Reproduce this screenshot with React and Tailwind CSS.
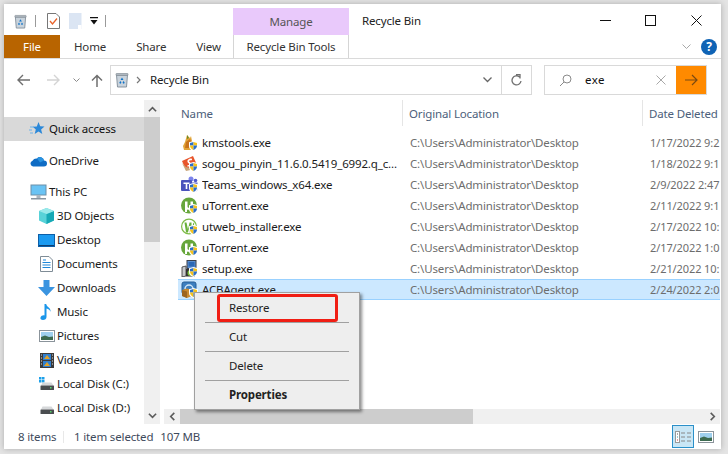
import React from "react";

const Bin = ({ s = 16 }) => (
  <svg width={s} height={s} viewBox="0 0 16 16">
    <path d="M2.5 3h11l-1 12h-9z" fill="#c9d3dc" stroke="#7f8b96" strokeWidth=".9" />
    <rect x="2" y="1.5" width="12" height="2" rx=".5" fill="#aeb7bf" stroke="#7c868f" strokeWidth=".6" />
    <path d="M8 5.500l1.500 2.400h-3zM5.200 11l1.200-2 1 1.600-.7 1.200zM10.800 11l-1.200-2-1 1.600.7 1.200z" fill="#0f73c9" />
  </svg>
);

const Shield = () => (
  <svg className="absolute left-[8px] top-[7px]" width="9" height="10" viewBox="0 0 9 10">
    <path d="M4.5 0L9 1.200V5c0 2.600-2 4.200-4.500 5C2 9.200 0 7.600 0 5V1.200z" fill="#fff" />
    <path d="M4.5 1L1 2v2.600h3.500z" fill="#2a6fc9" />
    <path d="M4.5 1L8 2v2.600H4.500z" fill="#f5c21b" />
    <path d="M1 4.600h3.500V9C2.600 8.300 1 7 1 4.600z" fill="#f5c21b" />
    <path d="M8 4.600H4.500V9C6.400 8.300 8 7 8 4.600z" fill="#2a6fc9" />
  </svg>
);

const FileIcon = ({ kind }) => (
  <span className="relative block w-[17px] h-[17px] shrink-0">
    {kind === "kms" && (
      <svg width="17" height="17" viewBox="0 0 17 17">
        <path d="M6 1l3 3 1-2 1 5 3 4-3 5H3l-1-4 2-4z" fill="#e2a63a" />
        <path d="M5 8l4-3 2 4-3 5H4z" fill="#c9741c" />
        <path d="M6 1l2 3-2 1z" fill="#6b8a2b" />
      </svg>
    )}
    {kind === "sogou" && (
      <svg width="17" height="17" viewBox="0 0 17 17">
        <path d="M1 6L12 1l4 9-11 5z" fill="#e8552b" />
        <path d="M1 8l4 8 9-2-9-2z" fill="#caa57a" />
        <path d="M11 4.500C8 4 6 6 8 7.500s2 3-1.500 3.500" fill="none" stroke="#fff" strokeWidth="1.600" />
      </svg>
    )}
    {kind === "teams" && (
      <svg width="17" height="17" viewBox="0 0 17 17">
        <circle cx="10" cy="3" r="2.500" fill="#7b83eb" />
        <circle cx="14.500" cy="4.500" r="1.800" fill="#5059c9" />
        <path d="M9 6.500h7.500V12a3 3 0 0 1-6 1.500L9 13z" fill="#5059c9" />
        <rect x="0" y="4" width="11" height="11" rx="1" fill="#4b53bc" />
        <path d="M2.500 6.500h6v1.400H6.300v5H4.700v-5H2.500z" fill="#fff" />
      </svg>
    )}
    {kind === "ut" && (
      <svg width="17" height="17" viewBox="0 0 17 17">
        <circle cx="8" cy="8.500" r="8" fill="#66a63b" />
        <path d="M4 4.500h2.500v5c0 1.800 2.500 1.800 3 0v-5H12v10H9.500v-2.500c-1.200 1-2.500 1-3.500.5V15H4z" fill="#fff" />
      </svg>
    )}
    {kind === "utweb" && (
      <svg width="17" height="17" viewBox="0 0 17 17">
        <circle cx="8" cy="8.500" r="7.400" fill="#fff" stroke="#7dbb45" strokeWidth="1.200" />
        <path d="M3.500 4.500h2l1.500 7 1.500-7h2v7l2-7 .8 1-2.300 9H8.500L7.800 11 7 14.500H5z" fill="#6ab03a" />
      </svg>
    )}
    {kind === "setup" && (
      <svg width="17" height="17" viewBox="0 0 17 17">
        <rect x="6" y="0.500" width="9" height="8" fill="#5a8fd0" stroke="#3a3f4a" />
        <rect x="7.500" y="2" width="6" height="4.500" fill="#2c68b5" />
        <path d="M1 7l4-1v10l-4 1z" fill="#c7c9cc" stroke="#333" strokeWidth=".8" />
        <rect x="5" y="9" width="9" height="7.500" fill="#333" />
        <circle cx="9.500" cy="13" r="3" fill="#7ec13d" />
        <circle cx="9.500" cy="13" r="1" fill="#fff" />
      </svg>
    )}
    {kind === "acb" && (
      <svg width="17" height="17" viewBox="0 0 17 17">
        <rect x="1" y="1" width="14" height="12" rx="2" fill="#3c7fc0" stroke="#275e96" />
        <path d="M4 8a4 4 0 0 1 8 0" fill="none" stroke="#cfe6f8" strokeWidth="1.500" />
        <path d="M1 9l5-1.500L11 9v6l-5 2-5-2z" fill="#c98a2f" />
        <path d="M1 9l5 1.500V17l-5-2z" fill="#9c6520" />
      </svg>
    )}
    <Shield />
  </span>
);

const NavIcon = ({ kind }) => {
  if (kind === "star")
    return (
      <svg width="16" height="16" viewBox="0 0 16 16">
        <path d="M9.500 1l1.700 4.300 4.300.3-3.400 2.800 1.200 4.600-3.800-2.500-3.800 2.500 1.100-4.500L3.800 5.700l4-.3z" fill="#2b88d8" />
        <path d="M1 6h4M0 9h3M1 12h3" stroke="#6db3ea" strokeWidth="1" />
      </svg>
    );
  if (kind === "cloud")
    return (
      <svg width="17" height="12" viewBox="0 0 17 12">
        <path d="M3 11.500a3 3 0 0 1-.5-5.800A4.500 4.500 0 0 1 7 3.500a4 4 0 0 1 7 2 3 3 0 0 1 0 6z" fill="#0f6cc4" />
        <path d="M7 3.500a4 4 0 0 1 7 2l-4 2z" fill="#2b93e0" />
      </svg>
    );
  if (kind === "pc")
    return (
      <svg width="17" height="16" viewBox="0 0 17 16">
        <rect x="1" y="1" width="15" height="10" fill="#69c3f4" stroke="#6d8fa8" />
        <rect x="6.500" y="11" width="4" height="3" fill="#a9b6c0" />
        <rect x="1" y="14" width="15" height="1.500" fill="#8795a1" />
      </svg>
    );
  if (kind === "3d")
    return (
      <svg width="17" height="16" viewBox="0 0 17 16">
        <path d="M8.500 0L16 3v9.500L8.500 16 1 12.500V3z" fill="#58d2d8" />
        <path d="M8.500 6L16 3v9.500L8.500 16z" fill="#17a9b5" />
        <path d="M8.500 6L1 3l7.500-3L16 3z" fill="#9ae9ea" />
      </svg>
    );
  if (kind === "desktop")
    return (
      <svg width="17" height="13" viewBox="0 0 17 13">
        <rect x="0.500" y="0.500" width="16" height="12" fill="#1b9af0" stroke="#0d5fa8" />
        <rect x="1" y="11" width="15" height="1" fill="#0d3f72" />
      </svg>
    );
  if (kind === "doc")
    return (
      <svg width="13" height="16" viewBox="0 0 13 16">
        <path d="M.5.500h8.500l3.500 3.500v11.500H.500z" fill="#fff" stroke="#7f8c96" />
        <path d="M3 4h3M2.500 6.500h8M2.500 9h8M2.500 11.500h8" stroke="#1e88d8" strokeWidth="1.100" />
      </svg>
    );
  if (kind === "down")
    return (
      <svg width="17" height="16" viewBox="0 0 17 16">
        <path d="M5.500 0h6v7H17l-8.500 9L0 7h5.500z" fill="#3a94e0" />
      </svg>
    );
  if (kind === "music")
    return (
      <svg width="13" height="16" viewBox="0 0 13 16">
        <path d="M4.500 0h1.700c.3 3 5 3.500 4.300 8-.2-2-2-3-4-3.500V13c0 1.800-1.600 3-3.500 3S0 15 .5 13.500 3 11 4.500 11.500z" fill="#1a96ea" />
      </svg>
    );
  if (kind === "pic")
    return (
      <svg width="16" height="12" viewBox="0 0 16 12">
        <rect x="0.500" y="0.500" width="15" height="11" fill="#fff" stroke="#8b949b" />
        <rect x="2" y="2" width="12" height="8" fill="#9fd0ee" />
        <path d="M2 7l4-1.500 4 1.500 4-.5V10H2z" fill="#3d6b50" />
      </svg>
    );
  if (kind === "video")
    return (
      <svg width="14" height="15" viewBox="0 0 14 15">
        <rect width="14" height="15" fill="#3a3a3a" />
        <rect x="3" y="1" width="8" height="6" fill="#2f7fd0" />
        <rect x="3" y="8" width="8" height="6" fill="#2f7fd0" />
        <path d="M4 6l3-4 3 4zM4 13l3-4 3 4z" fill="#e0a22a" />
        <path d="M1 2h1M1 5h1M1 8h1M1 11h1M12 2h1M12 5h1M12 8h1M12 11h1" stroke="#ddd" />
      </svg>
    );
  return (
    <svg width="16" height="14" viewBox="0 0 16 14">
      {kind === "c" && (
        <g fill="#1ca0ea">
          <rect x="0" y="0" width="2.500" height="2.500" />
          <rect x="3" y="0" width="2.500" height="2.500" />
          <rect x="0" y="3" width="2.500" height="2.500" />
          <rect x="3" y="3" width="2.500" height="2.500" />
        </g>
      )}
      <path d="M2 8.500L3.500 5.500h9L14.500 8.500z" fill="#d6d8da" />
      <rect x="1.500" y="8.500" width="13.500" height="4.500" rx=".5" fill="#4a4d50" />
      <rect x="11" y="10" width="1.500" height="1.500" fill="#55d66a" />
    </svg>
  );
};

const Chevron = ({ d, w = 9 }) => (
  <svg width={w} height={w} viewBox="0 0 10 10">
    <path d={d} fill="none" stroke="#5c5c5c" strokeWidth="1.800" />
  </svg>
);

const navItems = [
  ["cloud", "OneDrive", 0, "mt-[8px]"],
  ["pc", "This PC", 0, "mt-[7px]"],
  ["3d", "3D Objects", 1, ""],
  ["desktop", "Desktop", 1, ""],
  ["doc", "Documents", 1, ""],
  ["down", "Downloads", 1, ""],
  ["music", "Music", 1, ""],
  ["pic", "Pictures", 1, ""],
  ["video", "Videos", 1, ""],
  ["c", "Local Disk (C:)", 1, ""],
  ["d", "Local Disk (D:)", 1, ""],
];

const files = [
  ["kms", "kmstools.exe", "1/17/2022 9:2"],
  ["sogou", "sogou_pinyin_11.6.0.5419_6992.q_c...", "1/18/2022 9:1"],
  ["teams", "Teams_windows_x64.exe", "2/9/2022 2:47"],
  ["ut", "uTorrent.exe", "2/11/2022 9:1"],
  ["utweb", "utweb_installer.exe", "2/17/2022 10:"],
  ["ut", "uTorrent.exe", "2/17/2022 1:0"],
  ["setup", "setup.exe", "2/21/2022 10:"],
  ["acb", "ACBAgent.exe", "2/24/2022 2:0"],
];

export default function App() {
  return (
    <div className="w-[728px] h-[454px] overflow-hidden bg-[#e4e4e4] pl-[4px] pt-[4px] font-['Noto_Sans',sans-serif] text-[11.5px] tracking-[-0.15px] leading-[16px] text-[#1b1b1b]">
      <div className="relative w-[717px] h-[445px] bg-white flex flex-col shadow-[0_0_6px_rgba(0,0,0,0.25)] overflow-hidden">
        {/* title bar */}
        <div className="h-[31px] flex items-end shrink-0">
          <div className="w-[229px] h-[31px] flex items-center pl-[9px] pt-[3px]">
            <Bin s={15} />
            <span className="ml-[7px] w-px h-[12px] bg-[#9a9a9a]" />
            <svg className="ml-[11px]" width="13" height="16" viewBox="0 0 13 16">
              <path d="M.5.500h8.500l3.500 3.500v11.500H.500z" fill="#fff" stroke="#777" />
              <path d="M3 8l2.500 3L10 5.500" fill="none" stroke="#e8622a" strokeWidth="1.300" />
            </svg>
            <svg className="ml-[9px]" width="13" height="16" viewBox="0 0 13 16">
              <path d="M0 0h12.500v16H0z" fill="#dbe5f3" />
              <path d="M9 12h3.500v4H9z" fill="#fff" />
            </svg>
            <svg className="ml-[8px]" width="8" height="8" viewBox="0 0 8 8">
              <path d="M0 0h8v1.200H0zM.5 3h7L4 7.500z" fill="#111" />
            </svg>
            <span className="ml-[7px] w-px h-[12px] bg-[#9a9a9a]" />
          </div>
          <div className="w-[116px] h-[27px] bg-[#e9c9fb] flex items-center justify-center pt-[1px] text-[#555]">Manage</div>
          <div className="ml-[13px] h-[31px] flex items-center pt-[3px] text-[#222]">Recycle Bin</div>
          <div className="ml-auto h-[31px] flex items-center pr-[19px] pt-[1px]">
            <svg width="11" height="11" viewBox="0 0 11 11"><path d="M0 5.500h11" stroke="#111" /></svg>
            <svg className="ml-[34px]" width="11" height="11" viewBox="0 0 11 11"><rect x=".5" y=".5" width="10" height="10" fill="none" stroke="#111" /></svg>
            <svg className="ml-[35px]" width="11" height="11" viewBox="0 0 11 11"><path d="M.5.500l10 10M10.500.500l-10 10" stroke="#111" /></svg>
          </div>
        </div>
        {/* ribbon tabs */}
        <div className="h-[24px] flex items-stretch border-b border-[#dadada] shrink-0">
          <div className="w-[56px] h-[23px] bg-[#b86400] text-white flex items-center justify-center">File</div>
          <div className="w-[173px] flex items-center text-[#333]">
            <span className="ml-[14px]">Home</span>
            <span className="ml-[30px]">Share</span>
            <span className="ml-[30px]">View</span>
          </div>
          <div className="w-[116px] border-x border-[#d5d5d5] flex items-center justify-center text-[#333]">Recycle Bin Tools</div>
          <div className="ml-auto flex items-center pr-[4px] pt-[1px]">
            <svg width="9" height="6" viewBox="0 0 9 6"><path d="M.5.500l4 4 4-4" fill="none" stroke="#a8a8a8" /></svg>
            <span className="ml-[10px] w-[16px] h-[16px] rounded-full bg-[#0f63b5] text-white font-bold text-[12px] leading-[16px] text-center">?</span>
          </div>
        </div>
        {/* address row */}
        <div className="h-[41px] flex items-center shrink-0 pt-[6px] pb-[5px]">
          <svg className="ml-[13px]" width="13" height="12" viewBox="0 0 13 12"><path d="M13 6H1.500M6 1L1 6l5 5" fill="none" stroke="#6f6f6f" strokeWidth="1.400" /></svg>
          <svg className="ml-[17px]" width="13" height="12" viewBox="0 0 13 12"><path d="M0 6h11.500M7 1l5 5-5 5" fill="none" stroke="#d4d4d4" strokeWidth="1.400" /></svg>
          <svg className="ml-[13px]" width="7" height="5" viewBox="0 0 7 5"><path d="M.5.500l3 3 3-3" fill="none" stroke="#8a8a8a" /></svg>
          <svg className="ml-[11px]" width="12" height="13" viewBox="0 0 12 13"><path d="M6 13V1.500M1 6.500l5-5 5 5" fill="none" stroke="#6f6f6f" strokeWidth="1.500" /></svg>
          <div className="ml-[7px] w-[422px] h-[30px] border border-[#d9d9d9] flex items-center">
            <span className="ml-[3px]"><Bin s={16} /></span>
            <svg className="ml-[6px]" width="5" height="8" viewBox="0 0 5 8"><path d="M1 1l3 3-3 3" fill="none" stroke="#777" strokeWidth="1.200" /></svg>
            <span className="ml-[9px]">Recycle Bin</span>
            <svg className="ml-auto mr-[9px]" width="9" height="6" viewBox="0 0 9 6"><path d="M.5.500l4 4 4-4" fill="none" stroke="#666" strokeWidth="1.300" /></svg>
            <div className="w-[30px] h-full border-l border-[#d9d9d9] flex items-center justify-center">
              <svg width="11" height="12" viewBox="0 0 11 12"><path d="M8.500 3A4.500 4.500 0 1 0 10 7M5 .5h4v4" fill="none" stroke="#707070" strokeWidth="1.300" /></svg>
            </div>
          </div>
          <div className="ml-[12px] w-[163px] h-[30px] border border-[#d9d9d9] flex items-center">
            <svg className="ml-[14px]" width="13" height="13" viewBox="0 0 13 13"><circle cx="8" cy="5" r="4" fill="none" stroke="#8a8a8a" /><path d="M5 8l-4 4" stroke="#8a8a8a" /></svg>
            <span className="ml-[13px] tracking-[0.4px] text-[#111]">exe</span>
            <svg className="ml-auto mr-[10px]" width="10" height="10" viewBox="0 0 10 10"><path d="M.5.500l9 9M9.500.500l-9 9" stroke="#a8a8a8" /></svg>
            <div className="w-[30px] h-full bg-[#ff8a00] flex items-center justify-center">
              <svg width="13" height="12" viewBox="0 0 13 12"><path d="M0 6h12M7 1l5 5-5 5" fill="none" stroke="#7a4a12" strokeWidth="1.200" /></svg>
            </div>
          </div>
        </div>
        {/* body */}
        <div className="flex flex-1 min-h-0">
          {/* nav */}
          <div className="w-[140px] shrink-0 pt-[17px]">
            <div className="h-[24px] bg-[#d9d9d9] flex items-center">
              <span className="w-[26px] ml-[26px] -translate-x-[1px]"><NavIcon kind="star" /></span>
              <span className="-ml-[7px] text-[#111]">Quick access</span>
            </div>
            {navItems.map(([k, t, sub, mt]) => (
              <div key={t} className={`h-[24px] flex items-center ${mt}`}>
                <span className={sub ? "ml-[32px] w-[21px] flex justify-center" : "ml-[24px] w-[21px] flex justify-center"}>
                  <NavIcon kind={k} />
                </span>
                <span>{t}</span>
              </div>
            ))}
          </div>
          {/* nav scrollbar */}
          <div className="w-[16px] shrink-0 bg-[#f0f0f0] flex flex-col items-center h-[324px]">
            <div className="h-[17px] flex items-center pt-[2px]"><Chevron d="M1 7l4-4 4 4" /></div>
            <div className="w-full h-[125px] bg-[#cdcdcd]" />
            <div className="mt-auto h-[17px] flex items-center"><Chevron d="M1 3l4 4 4-4" /></div>
          </div>
          {/* main */}
          <div className="flex-1 min-w-0 flex flex-col ml-[4px] mr-[1px]">
            <div className="h-[26px] flex items-center text-[#4c607a] shrink-0">
              <span className="w-[239px] pl-[17px] pt-[1px] h-full flex items-center border-r border-[#e5e5e5]">Name</span>
              <span className="w-[240px] pl-[6px] pt-[1px] h-full flex items-center border-r border-[#e5e5e5]">Original Location</span>
              <span className="pl-[6px] pt-[1px] whitespace-nowrap">Date Deleted</span>
            </div>
            <div className="flex-1 min-h-0 pt-[6px] pl-[14px]">
              {files.map(([k, n, d], i) => (
                <div key={i} className={`h-[21px] flex items-center whitespace-nowrap ${i === 7 ? "bg-[#cce8ff] border-y border-[#99d1ff]" : ""}`}>
                  <span className="ml-[3px]"><FileIcon kind={k} /></span>
                  <span className="w-[208px] ml-[4px] pt-[1px] shrink-0 overflow-hidden">{n}</span>
                  <span className="w-[240px] pt-[1px] text-[#6d6d6d] shrink-0">C:\Users\Administrator\Desktop</span>
                  <span className="pt-[1px] text-[#6d6d6d] text-[11px] tracking-[-0.1px]">{d}</span>
                </div>
              ))}
            </div>
            <div className="h-[15px] bg-[#f0f0f0] flex items-center shrink-0">
              <span className="w-[16px] flex justify-center"><Chevron d="M7 1L3 5l4 4" /></span>
              <div className="w-[293px] h-full bg-[#cdcdcd]" />
              <span className="ml-auto w-[16px] flex justify-center"><Chevron d="M3 1l4 4-4 4" /></span>
            </div>
          </div>
        </div>
        {/* status */}
        <div className="h-[25px] flex items-center shrink-0 text-[#3e4a5c]">
          <span className="ml-[14px] w-[45px]">8 items</span>
          <span className="w-px h-[12px] bg-[#e8e8e8]" />
          <span className="ml-[10px]">1 item selected</span>
          <span className="ml-[7px]">107 MB</span>
          <div className="ml-auto flex items-center">
            <div className="w-[22px] h-[23px] bg-[#c9e6f5] border border-[#2b90c9] flex items-center justify-center">
              <svg width="16" height="12" viewBox="0 0 16 12">
                <rect x=".5" y=".5" width="4" height="11" fill="#fff" stroke="#999" />
                <path d="M2 3h1" stroke="#555" /><path d="M2 6h1" stroke="#39a" /><path d="M2 9h1" stroke="#c33" />
                <path d="M6 2h4M12 2h4M6 6h4M12 6h4M6 10h4M12 10h4" stroke="#888" />
              </svg>
            </div>
            <span className="ml-[4px] mr-[7px]"><NavIcon kind="pic" /></span>
          </div>
        </div>
        {/* context menu */}
        <div className="absolute left-[190px] top-[288px] w-[166px] h-[118px] bg-[#eeeeee] border border-[#a0a0a0] shadow-[2px_2px_3px_rgba(0,0,0,0.45)] px-[10px] text-[#222]">
          <div className="h-[29px] flex items-center pl-[24px] pt-[1px]">Restore</div>
          <div className="h-px bg-[#a0a0a0]" />
          <div className="h-[28px] flex items-center pl-[24px]">Cut</div>
          <div className="h-px bg-[#a0a0a0]" />
          <div className="h-[28px] flex items-center pl-[24px]">Delete</div>
          <div className="h-px bg-[#a0a0a0]" />
          <div className="h-[28px] flex items-center pl-[24px] font-bold">Properties</div>
        </div>
        <div className="absolute left-[213px] top-[290px] w-[121px] h-[28px] border-[3px] border-[#f01e14] rounded-[3px]" />
      </div>
    </div>
  );
}
